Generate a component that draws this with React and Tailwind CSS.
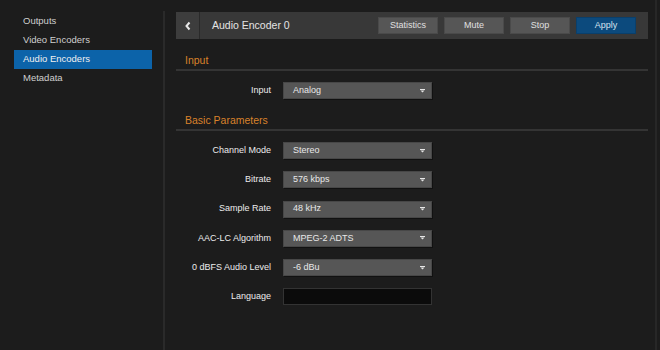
import React from 'react';

const nav = ['Outputs', 'Video Encoders', 'Audio Encoders', 'Metadata'];

const params = [
  { label: 'Channel Mode', value: 'Stereo' },
  { label: 'Bitrate', value: '576 kbps' },
  { label: 'Sample Rate', value: '48 kHz' },
  { label: 'AAC-LC Algorithm', value: 'MPEG-2 ADTS' },
  { label: '0 dBFS Audio Level', value: '-6 dBu' },
];

function Caret() {
  return (
    <svg width="5" height="4" viewBox="0 0 5 4" className="shrink-0">
      <rect x="0" y="0" width="5" height="1" fill="#e6e6e6" />
      <path d="M0.5 1.5 H4.5 L2.5 3.5 Z" fill="#e6e6e6" />
    </svg>
  );
}

function Select({ value }) {
  return (
    <div className="w-[149px] h-[17px] flex items-center justify-between pl-[9px] pr-[6px] bg-[#565656] border border-[#474747] shadow-[1px_1px_0_#111] text-[9px] text-[#e8e8e8]">
      <span>{value}</span>
      <Caret />
    </div>
  );
}

function Row({ label, children }) {
  return (
    <div className="flex items-center h-[17px]">
      <div className="w-[107px] pr-[12px] text-right text-[9px] text-[#ececec] whitespace-nowrap">{label}</div>
      {children}
    </div>
  );
}

function Section({ title }) {
  return (
    <div className="pt-[14px] pb-[2px] pl-[9px] border-b-2 border-[#343434] text-[10.5px] leading-[14px] text-[#d9822b]">
      {title}
    </div>
  );
}

function HeaderButton({ children, primary }) {
  return (
    <button
      className={
        primary
          ? 'w-[60px] h-[17px] text-[9px] text-[#d6e2ee] bg-[#0c4a7d] border border-[#0a3f6b]'
          : 'w-[60px] h-[17px] text-[9px] text-[#e0e0e0] bg-[#565656] border border-[#4a4a4a]'
      }
    >
      {children}
    </button>
  );
}

export default function App() {
  return (
    <div className="w-[660px] h-[350px] flex bg-[#1c1c1c] overflow-hidden" style={{ fontFamily: '"Liberation Sans", Arial, sans-serif' }}>
      <aside className="w-[163px] pt-[12px]">
        {nav.map((item) => (
          <div
            key={item}
            className={
              item === 'Audio Encoders'
                ? 'ml-[14px] mr-[11px] h-[19px] pl-[9px] flex items-center text-[9.5px] text-[#f0f0f0] bg-[#0c63a9]'
                : 'ml-[14px] mr-[11px] h-[19px] pl-[9px] flex items-center text-[9.5px] text-[#cfcfcf]'
            }
          >
            {item}
          </div>
        ))}
      </aside>
      <div className="w-[2px] mt-[11px] bg-[#2a2a2a]" />

      <main className="flex-1 pt-[12px] pl-[11px] pr-[7px]">
        <div className="h-[27px] flex bg-[#383838]">
          <div className="w-[24px] flex items-center justify-center bg-[#3d3d3d] border-r border-[#2a2a2a]">
            <svg width="8" height="10" viewBox="0 0 8 10">
              <path d="M5.5 1.5 L2.5 5 L5.5 8.5" fill="none" stroke="#e8e8e8" strokeWidth="2" />
            </svg>
          </div>
          <div className="flex-1 flex items-center justify-between pl-[12px] pr-[12px]">
            <span className="text-[10.5px] text-[#e4e4e4]">Audio Encoder 0</span>
            <div className="flex gap-[6px]">
              <HeaderButton>Statistics</HeaderButton>
              <HeaderButton>Mute</HeaderButton>
              <HeaderButton>Stop</HeaderButton>
              <HeaderButton primary>Apply</HeaderButton>
            </div>
          </div>
        </div>

        <Section title="Input" />
        <div className="mt-[11px]">
          <Row label="Input">
            <Select value="Analog" />
          </Row>
        </div>

        <Section title="Basic Parameters" />
        <div className="mt-[11px] flex flex-col gap-[12.3px]">
          {params.map((p) => (
            <Row key={p.label} label={p.label}>
              <Select value={p.value} />
            </Row>
          ))}
          <Row label="Language">
            <div className="w-[149px] h-[17px] bg-[#0b0b0b] border border-[#333]" />
          </Row>
        </div>
      </main>
      <div className="w-[2px] bg-[#272727]" />
      <div className="w-[3px]" />
    </div>
  );
}
